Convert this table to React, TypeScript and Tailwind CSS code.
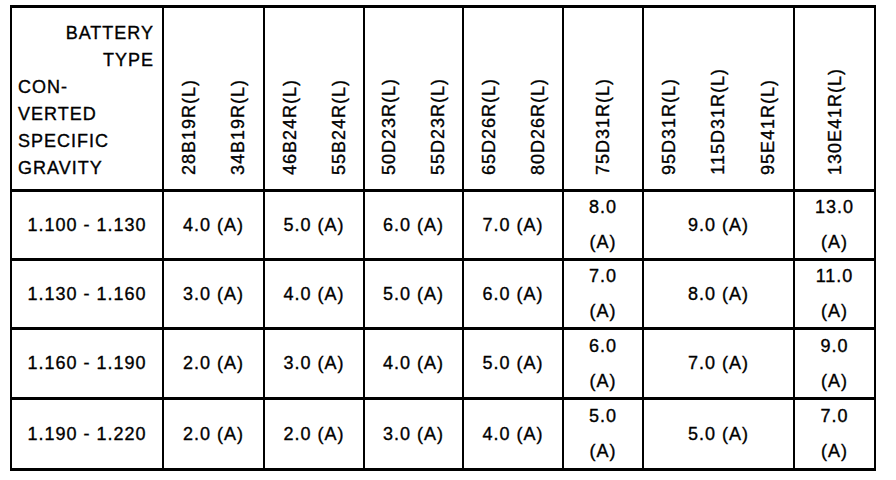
import { Fragment } from 'react'

const types: string[][] = [
  ['28B19R(L)', '34B19R(L)'],
  ['46B24R(L)', '55B24R(L)'],
  ['50D23R(L)', '55D23R(L)'],
  ['65D26R(L)', '80D26R(L)'],
  ['75D31R(L)'],
  ['95D31R(L)', '115D31R(L)', '95E41R(L)'],
  ['130E41R(L)'],
]

const rows: { range: string; values: string[] }[] = [
  { range: '1.100 - 1.130', values: ['4.0', '5.0', '6.0', '7.0', '8.0', '9.0', '13.0'] },
  { range: '1.130 - 1.160', values: ['3.0', '4.0', '5.0', '6.0', '7.0', '8.0', '11.0'] },
  { range: '1.160 - 1.190', values: ['2.0', '3.0', '4.0', '5.0', '6.0', '7.0', '9.0'] },
  { range: '1.190 - 1.220', values: ['2.0', '2.0', '3.0', '4.0', '5.0', '5.0', '7.0'] },
]

// narrow columns wrap the value onto two lines
const narrow = [false, false, false, false, true, false, true]

export default function App() {
  return (
    <div className="w-[896px] h-[480px] bg-white text-black font-['Liberation_Sans',Arial,sans-serif] text-[18px] tracking-[1px] [-webkit-text-stroke:0.35px_black]">
      <div className="ml-[10px] pt-[5px]">
        <div className="grid w-fit bg-black gap-x-[2px] gap-y-[3px] px-[2px] py-[3px] grid-cols-[150px_99px_98px_97px_98px_78px_149px_79px] grid-rows-[181px_66px_66px_67px_68px]">
          <div className="bg-white pt-[12px] pl-[6px] pr-[8px] leading-[27px]">
            <div className="text-right">BATTERY</div>
            <div className="text-right">TYPE</div>
            <div>CON-</div>
            <div>VERTED</div>
            <div>SPECIFIC</div>
            <div>GRAVITY</div>
          </div>
          {types.map((group, i) => (
            <div key={i} className="bg-white flex justify-around items-end pb-[14px]">
              {group.map((t) => (
                <span key={t} className="[writing-mode:vertical-rl] rotate-180 leading-[20px] whitespace-nowrap">
                  {t}
                </span>
              ))}
            </div>
          ))}
          {rows.map((r) => (
            <Fragment key={r.range}>
              <div className="bg-white flex items-center justify-center whitespace-nowrap">{r.range}</div>
              {r.values.map((v, j) => (
                <div key={j} className="bg-white flex items-center justify-center whitespace-nowrap">
                  {narrow[j] ? (
                    <div className="flex flex-col items-center leading-[35px]">
                      <span>{v}</span>
                      <span>(A)</span>
                    </div>
                  ) : (
                    <span>{v} (A)</span>
                  )}
                </div>
              ))}
            </Fragment>
          ))}
        </div>
      </div>
    </div>
  )
}
